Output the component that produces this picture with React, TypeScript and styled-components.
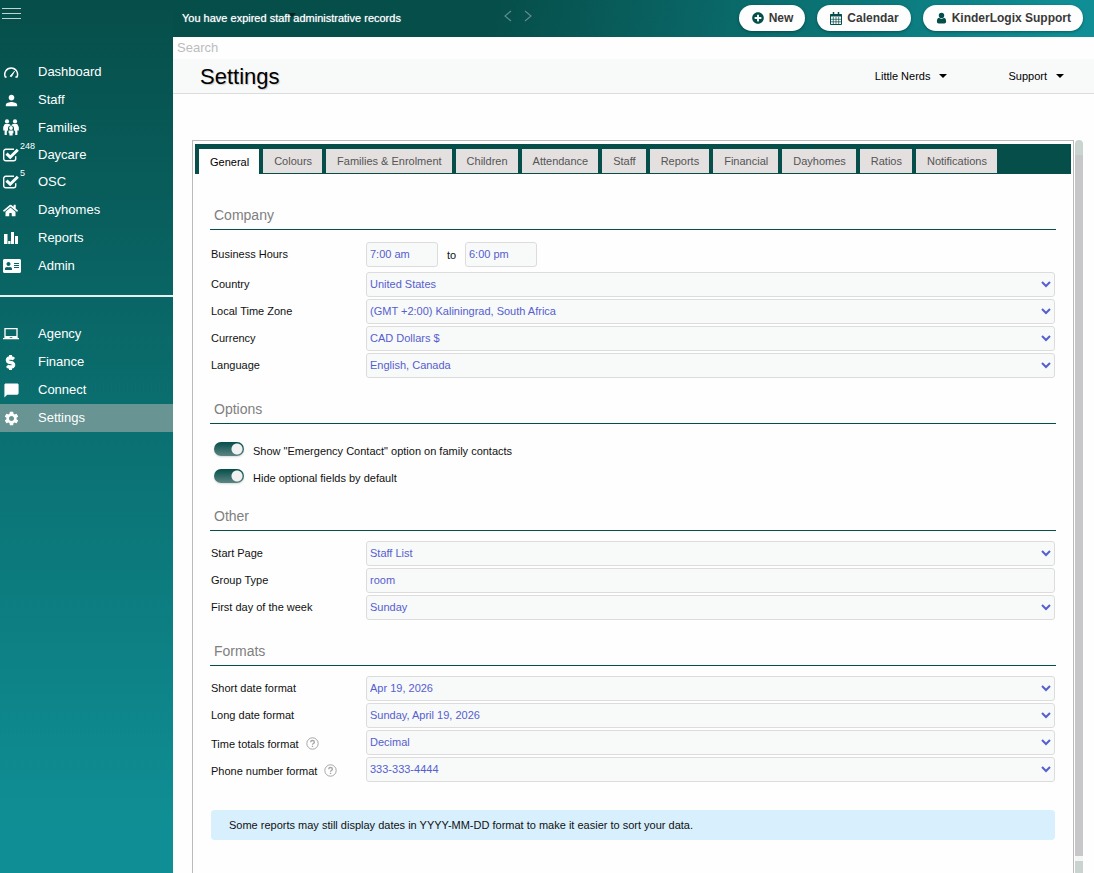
import React from 'react';
import styled, { createGlobalStyle } from 'styled-components';
import { FaHome, FaAddressCard, FaDollarSign, FaPlusCircle } from 'react-icons/fa';
import { MdPerson, MdChatBubble, MdLaptopChromebook, MdSettings } from 'react-icons/md';

const dark = '#064e4a';
const teal = '#0f8f95';
const line = '#dcdcdc';
const field = '#f8f9f9';
const ink = '#111111';
const blue = '#5560cf';

const GlobalStyle = createGlobalStyle`
  * { box-sizing: border-box; }
  body {
    margin: 0;
    background: #fefefe;
    color: ${ink};
    font: 11px/16px "Liberation Sans", Arial, sans-serif;
  }
  button, input, select { font: inherit; color: inherit; margin: 0; }
  button { cursor: pointer; border: 0; background: none; padding: 0; }
`;

const Shell = styled.div`
  display: flex;
  height: 100vh;
  overflow: hidden;
`;

/* Sidebar */

const Sidebar = styled.nav`
  flex: 0 0 173px;
  background: linear-gradient(180deg, ${dark}, ${teal} 95%);
  color: #fff;
`;

const MenuButton = styled.button`
  display: flex;
  flex-direction: column;
  gap: 4px;
  width: 21px;
  height: 58px;
  padding: 8px 0 0 2px;
`;

const MenuBar = styled.span`
  height: 1px;
  background: #c3d3d2;
`;

const NavList = styled.ul`
  list-style: none;
  margin: 0;
  padding: 0;
`;

const NavLink = styled.a<{ $active?: boolean; $compact?: boolean }>`
  display: flex;
  align-items: center;
  height: ${p => (p.$compact ? 27 : 28)}px;
  padding-left: 3px;
  color: #fff;
  font-size: 13px;
  text-decoration: none;
  background: ${p => (p.$active ? '#689493' : 'transparent')};
`;

const NavIcon = styled.span`
  position: relative;
  display: flex;
  width: 35px;
`;

const Count = styled.span`
  position: absolute;
  left: 17px;
  top: -7px;
  font-size: 9px;
  line-height: 10px;
`;

const NavDivider = styled.hr`
  height: 2px;
  margin: 15px 0 23px;
  border: 0;
  background: #e6eeee;
`;

/* Header */

const Page = styled.div`
  display: flex;
  flex-direction: column;
  flex: 1;
  min-width: 0;
`;

const TopBar = styled.header`
  display: flex;
  align-items: center;
  gap: 12px;
  height: 37px;
  padding: 0 11px 1px 9px;
  background: linear-gradient(100deg, ${dark} 35%, ${teal} 97%);
`;

const Notice = styled.div`
  position: relative;
  flex: 0 0 309px;
  color: #fff;
  text-shadow: 0 0 1px rgba(255, 255, 255, 0.7);
`;

const NoticeCaret = styled.span`
  position: absolute;
  left: 106px;
  top: 3px;
  border: 4px solid transparent;
  border-top-color: #0a1f1e;
  border-bottom: 0;
`;

const Pager = styled.div`
  display: flex;
  gap: 12px;
  flex: 1;
  color: #5f8c8b;
`;

const Pill = styled.button`
  display: flex;
  align-items: center;
  gap: 5px;
  height: 26px;
  padding: 0 12px 0 13px;
  border-radius: 13px;
  background: #fefefe;
  color: #3a3a3a;
  font-size: 12px;
  font-weight: bold;
  white-space: nowrap;
  box-shadow: 0 1px 3px rgba(0, 0, 0, 0.35);
  svg { color: ${dark}; }
`;

const Search = styled.input`
  height: 22px;
  padding: 0 4px 2px;
  border: 0;
  outline: 0;
  background: #fefefe;
  font-size: 13px;
  &::placeholder { color: #bbbdbd; opacity: 1; }
`;

const TitleBar = styled.div`
  display: flex;
  align-items: center;
  height: 35px;
  padding: 0 30px 0 27px;
  border-bottom: 1px solid ${line};
  background: #f8f9f9;
`;

const Title = styled.h1`
  flex: 1;
  margin: 0;
  padding-top: 2px;
  color: #000;
  font-size: 22px;
  line-height: 32px;
  font-weight: normal;
  text-shadow: 1px 1px 1px rgba(0, 0, 0, 0.2);
`;

const DropButton = styled.button`
  display: flex;
  align-items: center;
  gap: 9px;
  margin-left: 61px;
  color: #000;
  &::after {
    content: '';
    border: 4px solid transparent;
    border-top-color: #000;
    border-bottom: 0;
  }
`;

/* Settings panel */

const Workspace = styled.main`
  display: flex;
  flex: 1;
  gap: 1px;
  min-height: 0;
  padding: 46px 11px 0 19px;
`;

const Panel = styled.div`
  flex: 1;
  min-width: 0;
  padding: 3px 2px 0;
  overflow: hidden;
  border: 1px solid #bbbbbb;
  border-bottom: 0;
`;

const Tabs = styled.div`
  display: flex;
  gap: 4px;
  height: 30px;
  padding: 5px 4px 0;
  background: ${dark};
`;

const Tab = styled.button<{ $active?: boolean }>`
  height: ${p => (p.$active ? 25 : 24)}px;
  padding: 0 10px 0 11px;
  background: ${p => (p.$active ? '#fefefe' : '#e3e0df')};
  color: ${p => (p.$active ? '#000' : '#555')};
  white-space: nowrap;
`;

const Form = styled.form`
  padding: 10px 15px 0;
`;

const SectionTitle = styled.h2`
  margin: 0;
  padding: 18px 4px 0;
  border-bottom: 1px solid ${dark};
  color: #808080;
  font-size: 14px;
  line-height: 27px;
  font-weight: normal;
`;

const Fields = styled.div`
  display: grid;
  gap: 2px;
  padding: 10px 1px 0;
`;

const Row = styled.div`
  display: flex;
  align-items: center;
  height: 25px;
`;

const HoursRow = styled(Row)`
  margin: 2px 0 3px;
`;

const Label = styled.label<{ $help?: boolean }>`
  display: flex;
  align-items: center;
  gap: 7px;
  flex: 0 0 155px;
  padding: ${p => (p.$help ? '3px 0 0' : '0 0 2px')};
`;

const Help = styled.svg`
  width: 13px;
  height: 13px;
  margin-bottom: 2px;
`;

const TextInput = styled.input<{ $short?: boolean }>`
  width: ${p => (p.$short ? '72px' : '100%')};
  height: 25px;
  padding: 0 3px 1px;
  border: 1px solid ${line};
  border-radius: 3px;
  background: ${field};
  color: ${blue};
`;

const Until = styled.span`
  width: 27px;
  text-align: center;
`;

const SelectWrap = styled.div`
  position: relative;
  flex: 1;
  svg {
    position: absolute;
    right: 4px;
    top: 8px;
    pointer-events: none;
  }
`;

const SelectBox = styled.select`
  display: block;
  width: 100%;
  height: 25px;
  padding: 0 20px 2px 3px;
  appearance: none;
  border: 1px solid ${line};
  border-radius: 3px;
  background: ${field};
  color: ${blue};
`;

const Switches = styled.div`
  display: grid;
  gap: 11px;
  padding: 18px 4px 0;
`;

const SwitchLabel = styled.label`
  display: flex;
  align-items: flex-start;
  gap: 9px;
  height: 16px;
  line-height: 18px;
`;

const Switch = styled.input`
  appearance: none;
  flex: none;
  width: 30px;
  height: 14px;
  border-radius: 7px;
  background:
    radial-gradient(circle at 23px 7px, #f1f1f1 5px, transparent 6px),
    linear-gradient(180deg, ${dark}, #5c8583);
  box-shadow: 0 1px 2px rgba(0, 0, 0, 0.15);
`;

const Info = styled.p`
  margin: 28px 1px 0;
  padding: 7px 18px;
  border-radius: 4px;
  background: #d8effd;
`;

const ScrollTrack = styled.div`
  display: flex;
  flex-direction: column;
  flex: 0 0 8px;
  background: #c9d3cf;
  border-radius: 4px 4px 0 0;
`;

const ScrollThumb = styled.div`
  flex: 1;
  margin: 15px 0 12px;
  background: #c7c7c9;
  border-bottom: 5px solid #f4f4f4;
`;

/* Drawn icons */

const GaugeIcon = () => (
  <svg width="16" height="14" viewBox="0 0 16 14" fill="none" stroke="#fff" strokeWidth="1.5">
    <path d="M3.6 12H2.3A6.4 6.4 0 1 1 14 12h-1.600" />
    <path d="M7 11.200 11.500 6.200 8.600 11.600z" fill="#fff" strokeWidth=".8" />
  </svg>
);

const FamilyIcon = () => (
  <svg width="16" height="17" viewBox="0 0 16 17" fill="#fff">
    <circle cx="4" cy="2.4" r="2.1" />
    <circle cx="12" cy="2.4" r="2.1" />
    <path d="M1.8 5h4.4L8 6.400 9.8 5h4.4L15.800 8v3.400h-1.400V16h-2.200v-3.400L11 11V9.500a3 3 0 0 0-6 0V11l-1.200 1.600V16H1.600v-4.600H.2V8z" />
    <circle cx="8" cy="9" r="1.900" />
    <path d="M5.600 11.400h4.800v2.800H9.600v2.400H6.400v-2.400h-.8z" />
  </svg>
);

const CheckIcon = () => (
  <svg width="16" height="14" viewBox="0 0 16 14" fill="none" stroke="#fff">
    <path d="M12.700 8.300v2.500a2 2 0 0 1-2 2H2.700a2 2 0 0 1-2-2V3.300a2 2 0 0 1 2-2h8.300" strokeWidth="1.400" />
    <path d="M3.500 5.600 7.200 9.200 14.800 1.800" strokeWidth="3" />
  </svg>
);

const BarsIcon = () => (
  <svg width="16" height="14" viewBox="0 0 16 14" fill="#fff">
    <path d="M1 3h3.500v10H1zM5.200 10h2.300v3H5.200zM8 1h3v12H8zM12 5h3v8h-3z" />
  </svg>
);

const UserIcon = () => (
  <svg width="11" height="12" viewBox="0 0 11 12" fill="currentColor">
    <circle cx="5.500" cy="3.400" r="2.700" />
    <path d="M3 5.700c1.400 1.300 3.600 1.300 5 0 1.600.3 2.100 1.800 2.100 3.800 0 1.300-.7 2-1.800 2H2.700c-1.100 0-1.800-.7-1.800-2 0-2 .5-3.500 2.100-3.800z" />
  </svg>
);

const CalendarIcon = () => (
  <svg width="12" height="13" viewBox="0 0 12 13" fill="none" stroke={dark}>
    <path d="M.5 2.500h11v10H.5z" />
    <path d="M0 3.500h12" strokeWidth="2" />
    <path d="M3.500 0v3M8.500 0v3" strokeWidth="1.500" />
    <path d="M3.300 5v7M6 5v7M8.700 5v7M1 7.300h10M1 9.800h10" strokeWidth=".7" />
  </svg>
);

const Angle = ({ right }: { right?: boolean }) => (
  <svg width="9" height="12" viewBox="0 0 9 12" fill="none" stroke="currentColor" strokeWidth="1.2">
    <path d={right ? 'M1 1l6 5-6 5' : 'M8 1 2 6l6 5'} />
  </svg>
);

const Chevron = () => (
  <svg width="10" height="8" viewBox="0 0 10 8" fill="none" stroke={blue} strokeWidth="2">
    <path d="M1 2l4 4 4-4" />
  </svg>
);

const HelpIcon = () => (
  <Help viewBox="0 0 13 13" fill="none" stroke="#a6a6a6">
    <circle cx="6.500" cy="6.500" r="5.700" />
    <path d="M4.700 5.200c0-2.300 3.700-2.300 3.700 0 0 1.300-1.900 1.300-1.900 2.500M6.500 8.800v1.300" strokeWidth="1.300" />
  </Help>
);

type NavEntry = { text: string; icon: React.ReactNode; count?: number; compact?: boolean; active?: boolean };

const primaryNav: NavEntry[] = [
  { text: 'Dashboard', icon: <GaugeIcon /> },
  { text: 'Staff', icon: <MdPerson size={17} /> },
  { text: 'Families', icon: <FamilyIcon />, compact: true },
  { text: 'Daycare', icon: <CheckIcon />, count: 248, compact: true },
  { text: 'OSC', icon: <CheckIcon />, count: 5 },
  { text: 'Dayhomes', icon: <FaHome size={15} /> },
  { text: 'Reports', icon: <BarsIcon /> },
  { text: 'Admin', icon: <FaAddressCard size={18} /> },
];

const secondaryNav: NavEntry[] = [
  { text: 'Agency', icon: <MdLaptopChromebook size={16} /> },
  { text: 'Finance', icon: <FaDollarSign size={15} stroke="#fff" strokeWidth={36} /> },
  { text: 'Connect', icon: <MdChatBubble size={17} /> },
  { text: 'Settings', icon: <MdSettings size={17} />, active: true },
];

const NavGroup = ({ items }: { items: NavEntry[] }) => (
  <NavList>
    {items.map(item => (
      <li key={item.text}>
        <NavLink href="#" $active={item.active} $compact={item.compact}>
          <NavIcon>
            {item.icon}
            {item.count && <Count>{item.count}</Count>}
          </NavIcon>
          {item.text}
        </NavLink>
      </li>
    ))}
  </NavList>
);

const SelectRow = ({ id, label, value, help }: { id: string; label: string; value: string; help?: boolean }) => (
  <Row>
    <Label htmlFor={id} $help={help}>
      {label}
      {help && <HelpIcon />}
    </Label>
    <SelectWrap>
      <SelectBox id={id} defaultValue={value}>
        <option>{value}</option>
      </SelectBox>
      <Chevron />
    </SelectWrap>
  </Row>
);

const tabs = [
  'General', 'Colours', 'Families & Enrolment', 'Children', 'Attendance', 'Staff',
  'Reports', 'Financial', 'Dayhomes', 'Ratios', 'Notifications',
];

export default function App() {
  return (
    <>
      <GlobalStyle />
      <Shell>
        <Sidebar>
          <MenuButton aria-label="Menu">
            <MenuBar />
            <MenuBar />
            <MenuBar />
          </MenuButton>
          <NavGroup items={primaryNav} />
          <NavDivider />
          <NavGroup items={secondaryNav} />
        </Sidebar>
        <Page>
          <TopBar>
            <Notice>
              You have expired staff administrative records
              <NoticeCaret />
            </Notice>
            <Pager>
              <button aria-label="Previous"><Angle /></button>
              <button aria-label="Next"><Angle right /></button>
            </Pager>
            <Pill><FaPlusCircle size={12} />New</Pill>
            <Pill><CalendarIcon />Calendar</Pill>
            <Pill><UserIcon />KinderLogix Support</Pill>
          </TopBar>
          <Search placeholder="Search" aria-label="Search" />
          <TitleBar>
            <Title>Settings</Title>
            <DropButton>Little Nerds</DropButton>
            <DropButton>Support</DropButton>
          </TitleBar>
          <Workspace>
            <Panel>
              <Tabs role="tablist">
                {tabs.map((tab, i) => (
                  <Tab key={tab} role="tab" aria-selected={i === 0} $active={i === 0}>{tab}</Tab>
                ))}
              </Tabs>
              <Form>
                <SectionTitle>Company</SectionTitle>
                <Fields>
                  <HoursRow>
                    <Label htmlFor="opens">Business Hours</Label>
                    <TextInput id="opens" $short defaultValue="7:00 am" />
                    <Until>to</Until>
                    <TextInput aria-label="Closing time" $short defaultValue="6:00 pm" />
                  </HoursRow>
                  <SelectRow id="country" label="Country" value="United States" />
                  <SelectRow id="zone" label="Local Time Zone" value="(GMT +2:00) Kaliningrad, South Africa" />
                  <SelectRow id="currency" label="Currency" value="CAD Dollars $" />
                  <SelectRow id="language" label="Language" value="English, Canada" />
                </Fields>
                <SectionTitle>Options</SectionTitle>
                <Switches>
                  <SwitchLabel>
                    <Switch type="checkbox" defaultChecked />
                    Show "Emergency Contact" option on family contacts
                  </SwitchLabel>
                  <SwitchLabel>
                    <Switch type="checkbox" defaultChecked />
                    Hide optional fields by default
                  </SwitchLabel>
                </Switches>
                <SectionTitle>Other</SectionTitle>
                <Fields>
                  <SelectRow id="start" label="Start Page" value="Staff List" />
                  <Row>
                    <Label htmlFor="group">Group Type</Label>
                    <SelectWrap>
                      <TextInput id="group" defaultValue="room" />
                    </SelectWrap>
                  </Row>
                  <SelectRow id="week" label="First day of the week" value="Sunday" />
                </Fields>
                <SectionTitle>Formats</SectionTitle>
                <Fields>
                  <SelectRow id="short" label="Short date format" value="Apr 19, 2026" />
                  <SelectRow id="long" label="Long date format" value="Sunday, April 19, 2026" />
                  <SelectRow id="totals" label="Time totals format" value="Decimal" help />
                  <SelectRow id="phone" label="Phone number format" value="333-333-4444" help />
                </Fields>
                <Info>Some reports may still display dates in YYYY-MM-DD format to make it easier to sort your data.</Info>
              </Form>
            </Panel>
            <ScrollTrack>
              <ScrollThumb />
            </ScrollTrack>
          </Workspace>
        </Page>
      </Shell>
    </>
  );
}
